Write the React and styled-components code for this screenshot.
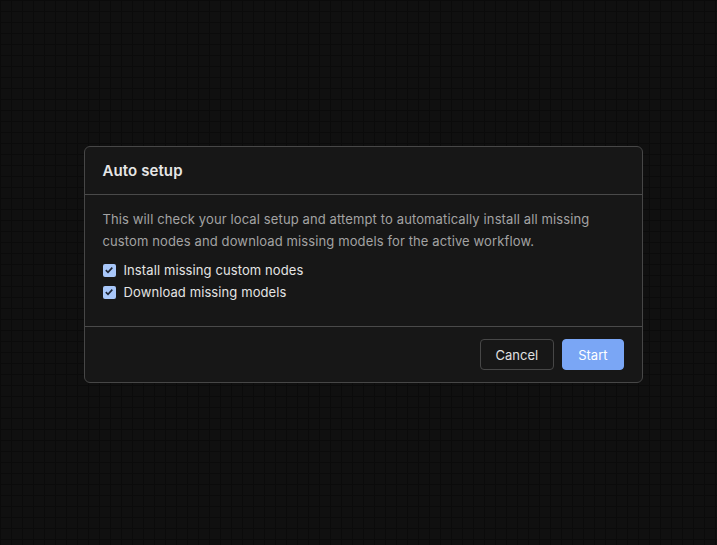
import React, { useState } from 'react';
import styled, { createGlobalStyle } from 'styled-components';

const Global = createGlobalStyle`
  html, body { margin: 0; height: 100%; }
  body {
    background-color: #101010;
    background-image:
      linear-gradient(to right, #0b0b0b 1px, transparent 1px),
      linear-gradient(to bottom, #0b0b0b 1px, transparent 1px);
    background-size: 11px 11px;
    font-family: Inter, "Noto Sans", sans-serif;
  }
  #root { height: 100%; }
`;

const Page = styled.div`
  height: 545px;
  display: flex;
  justify-content: center;
  padding-top: 146px;
  padding-left: 9px;
  box-sizing: border-box;
`;

const Dialog = styled.div`
  width: 559px;
  height: 237px;
  box-sizing: border-box;
  background: #171717;
  border: 1px solid #474747;
  border-radius: 6px;
  display: flex;
  flex-direction: column;
`;

const Header = styled.div`
  height: 48px;
  box-sizing: border-box;
  padding: 0 18px;
  display: flex;
  align-items: center;
  border-bottom: 1px solid #4a4a4a;
  color: #e6e6e6;
  font-size: 15px;
  font-weight: 600;
  letter-spacing: 0.1px;
`;

const Body = styled.div`
  flex: 1;
  padding: 13px 18px 0;
  border-bottom: 1px solid #4a4a4a;
`;

const Text = styled.p`
  margin: 0 0 7px;
  font-size: 13px;
  line-height: 22px;
  letter-spacing: 0.12px;
  color: #a3a3a3;
`;

const Check = styled.label`
  display: flex;
  align-items: center;
  gap: 8px;
  height: 22px;
  font-size: 13px;
  letter-spacing: 0.1px;
  color: #e4e4e4;
`;

const Box = styled.span`
  width: 13px;
  height: 13px;
  border-radius: 2px;
  background: #a8c7fa;
  display: flex;
  align-items: center;
  justify-content: center;
`;

const Footer = styled.div`
  height: 55px;
  padding: 0 18px;
  display: flex;
  align-items: center;
  justify-content: flex-end;
  gap: 8px;
`;

const Button = styled.button`
  height: 31px;
  padding: 0 15px;
  border-radius: 4px;
  font-family: inherit;
  font-size: 13px;
  cursor: pointer;
  border: 1px solid ${p => (p.$primary ? '#7aa6f5' : '#474747')};
  background: ${p => (p.$primary ? '#7aa6f5' : 'transparent')};
  color: ${p => (p.$primary ? '#ffffff' : '#e0e0e0')};
`;

const Tick = () => (
  <svg width="10" height="10" viewBox="0 0 10 10">
    <path d="M1.8 5.2 L4 7.3 L8.3 2.6" fill="none" stroke="#1c2433" strokeWidth="1.6" />
  </svg>
);

export default function App() {
  const [opts] = useState(['Install missing custom nodes', 'Download missing models']);
  return (
    <>
      <Global />
      <Page>
        <Dialog>
          <Header>Auto setup</Header>
          <Body>
            <Text>
              This will check your local setup and attempt to automatically install all missing
              custom nodes and download missing models for the active workflow.
            </Text>
            {opts.map(o => (
              <Check key={o}>
                <Box><Tick /></Box>
                {o}
              </Check>
            ))}
          </Body>
          <Footer>
            <Button>Cancel</Button>
            <Button $primary>Start</Button>
          </Footer>
        </Dialog>
      </Page>
    </>
  );
}
